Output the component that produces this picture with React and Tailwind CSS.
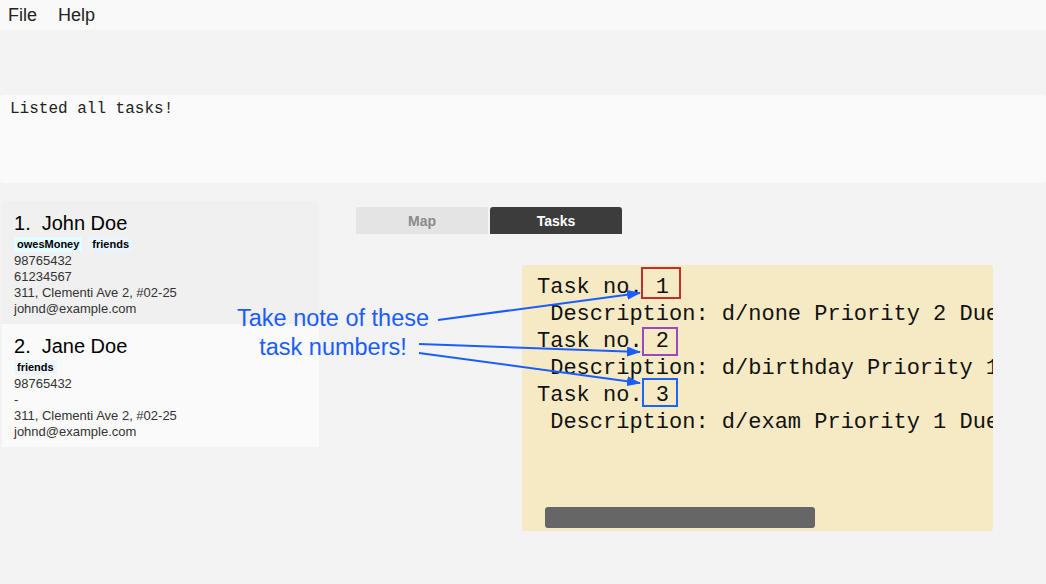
import React from "react";

const sans = { fontFamily: '"Liberation Sans", Arial, Helvetica, sans-serif' };
const mono = { fontFamily: '"Liberation Mono", "Courier New", monospace' };

function Tag({ children, bg }) {
  return (
    <span className={`inline-flex items-center h-[15px] px-[3px] text-[11px] font-bold text-black rounded-[2px] ${bg}`}>
      {children}
    </span>
  );
}

function PersonCard({ index, name, tags, phone, phone2, address, email, bg }) {
  return (
    <div className={`w-[317px] pt-[10px] pb-[7px] pl-[12px] ${bg}`}>
      <div className="h-[24px] leading-[24px] text-[20px] text-black flex gap-[11px]">
        <span>{index}.</span>
        <span>{name}</span>
      </div>
      <div className="h-[18px] pt-[1px] flex items-center gap-[7px]">
        {tags.map((t) => (
          <Tag key={t.label} bg={t.bg}>{t.label}</Tag>
        ))}
      </div>
      <div className="text-[13px] leading-[16px] text-[#333]">
        <div>{phone}</div>
        <div>{phone2}</div>
        <div>{address}</div>
        <div>{email}</div>
      </div>
    </div>
  );
}

const tasks = [
  ["Task no. 1", " Description: d/none Priority 2 Due"],
  ["Task no. 2", " Description: d/birthday Priority 1"],
  ["Task no. 3", " Description: d/exam Priority 1 Due"],
];

export default function App() {
  return (
    <div className="relative w-[1046px] h-[584px] bg-[#f3f3f3] overflow-hidden" style={sans}>
      {/* Menu bar */}
      <div className="h-[30px] bg-[#f9f9f9] flex items-center pl-[8px] gap-[21px] text-[18px] text-[#222]">
        <span>File</span>
        <span>Help</span>
      </div>

      {/* Spacer / command area */}
      <div className="h-[65px]" />

      {/* Result display */}
      <div className="h-[88px] bg-[#fafafa] rounded-[4px] pt-[4px] pl-[10px]">
        <div className="text-[16px] leading-[20px] text-[#222]" style={mono}>
          Listed all tasks!
        </div>
      </div>

      <div className="h-[17px]" />

      {/* Lower area */}
      <div className="flex">
        <div className="w-[319px] pl-[2px] pt-[1px] flex flex-col">
          <PersonCard
            index={1}
            name="John Doe"
            tags={[
              { label: "owesMoney", bg: "bg-[#e3fcff]" },
              { label: "friends", bg: "bg-[#eaf4fc]" },
            ]}
            phone="98765432"
            phone2="61234567"
            address="311, Clementi Ave 2, #02-25"
            email="johnd@example.com"
            bg="bg-[#f0f0f0]"
          />
          <PersonCard
            index={2}
            name="Jane Doe"
            tags={[{ label: "friends", bg: "bg-[#eef6fd]" }]}
            phone="98765432"
            phone2="-"
            address="311, Clementi Ave 2, #02-25"
            email="johnd@example.com"
            bg="bg-[#fafafa]"
          />
        </div>

        <div className="flex flex-col">
          <div className="ml-[37px] mt-[7px] flex gap-[2px]">
            <div className="w-[132px] h-[27px] pt-[2px] bg-[#e4e4e4] rounded-t-[2px] flex items-center justify-center text-[14px] font-bold text-[#8a8a8a]">
              Map
            </div>
            <div className="w-[132px] h-[27px] pt-[2px] bg-[#3c3c3c] rounded-t-[3px] flex items-center justify-center text-[14px] font-bold text-white">
              Tasks
            </div>
          </div>

          <div className="ml-[203px] mt-[31px] w-[471px] h-[266px] bg-[#f6eac5] rounded-[3px] overflow-hidden relative pt-[9px] pl-[15px]">
            <div className="text-[22px] leading-[27px] text-[#111] whitespace-pre" style={mono}>
              {tasks.map(([a, b]) => (
                <React.Fragment key={a}>
                  <div>{a}</div>
                  <div>{b}</div>
                </React.Fragment>
              ))}
            </div>
            <div className="absolute left-[23px] top-[242px] w-[270px] h-[21px] bg-[#666666] rounded-[3px]" />
          </div>
        </div>
      </div>

      {/* Annotation overlay */}
      <div className="absolute left-[228px] top-[304px] w-[210px] text-center text-[23.5px] leading-[29px] text-[#1a5dff]">
        <div>Take note of these</div>
        <div>task numbers!</div>
      </div>

      <svg className="absolute left-0 top-0 pointer-events-none" width="1046" height="584" viewBox="0 0 1046 584">
        <defs>
          <marker id="ah" markerWidth="14" markerHeight="10" refX="13" refY="5" orient="auto" markerUnits="userSpaceOnUse">
            <path d="M0,0 L14,5 L0,10 Z" fill="#1a5dff" />
          </marker>
        </defs>
        <line x1="438" y1="320" x2="640" y2="293" stroke="#1a5dff" strokeWidth="2" markerEnd="url(#ah)" />
        <line x1="419" y1="344" x2="640" y2="352" stroke="#1a5dff" strokeWidth="2" markerEnd="url(#ah)" />
        <line x1="419" y1="353" x2="640" y2="383" stroke="#1a5dff" strokeWidth="2" markerEnd="url(#ah)" />
        <rect x="642" y="268" width="38" height="30" fill="none" stroke="#c0302a" strokeWidth="2" />
        <rect x="643" y="328" width="34" height="27" fill="none" stroke="#9b47c2" strokeWidth="2" />
        <rect x="643" y="379" width="34" height="27" fill="none" stroke="#1a63ff" strokeWidth="2" />
      </svg>
    </div>
  );
}
